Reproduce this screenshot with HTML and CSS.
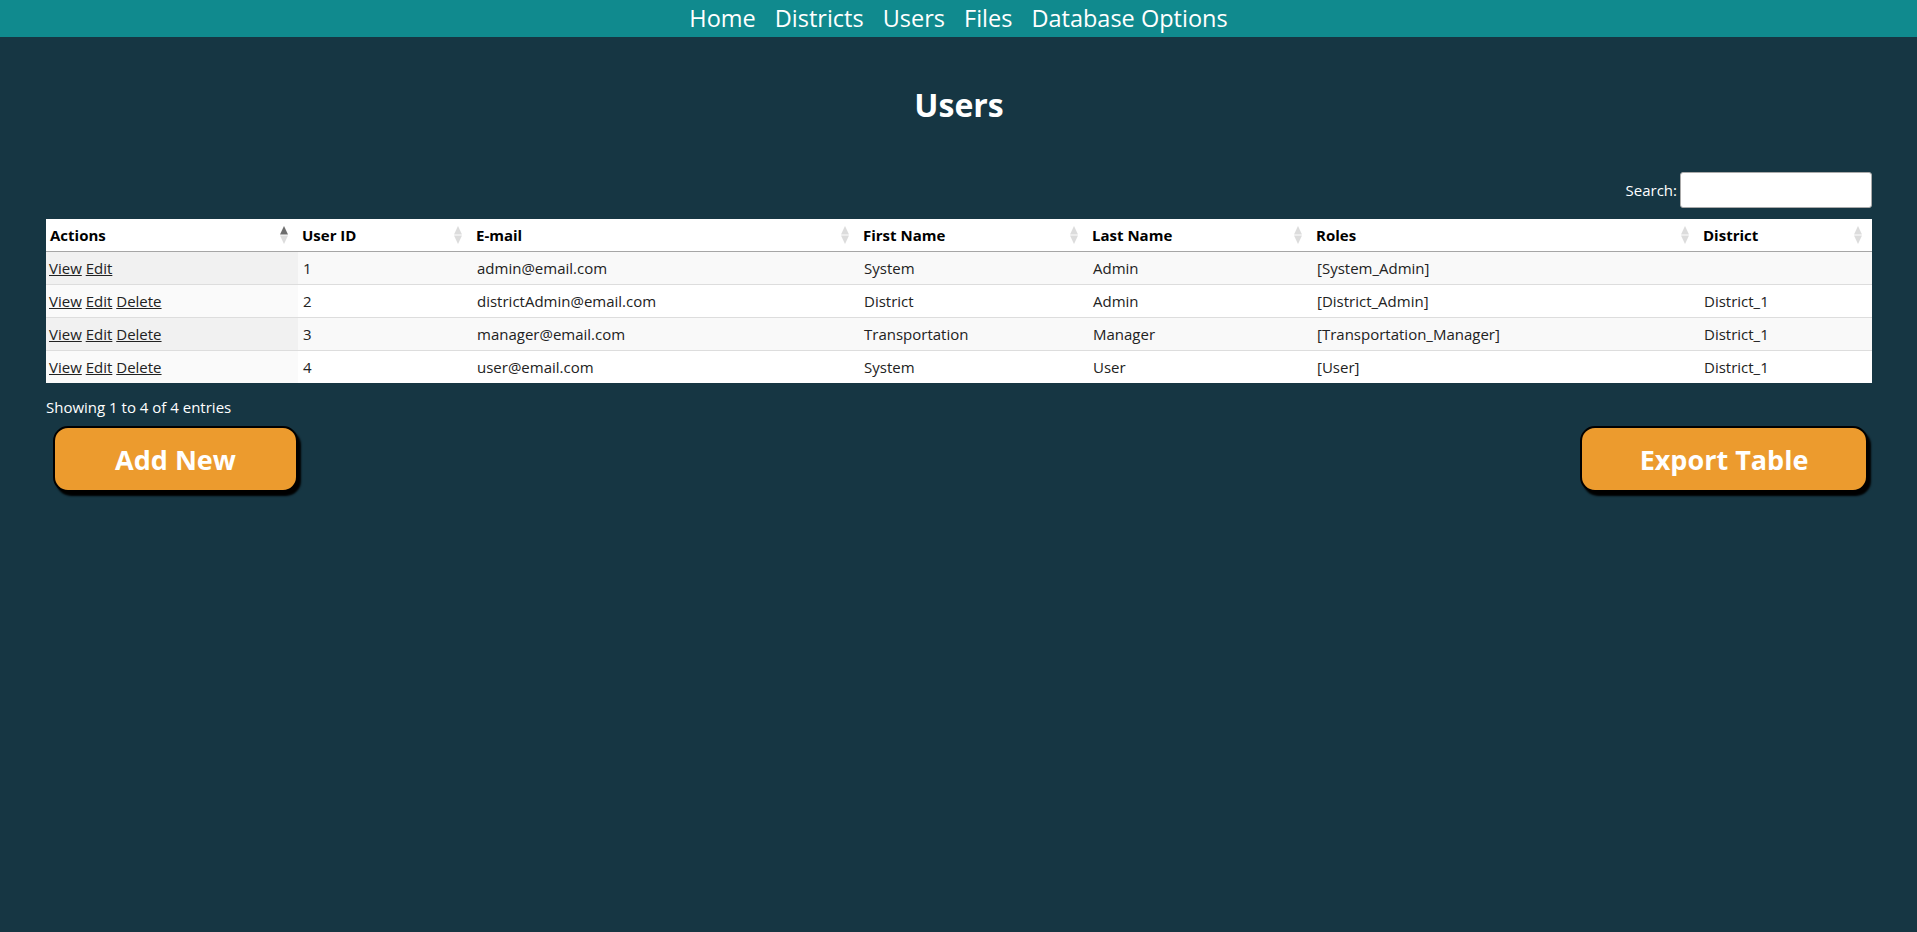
FILE: index.html
```html
<!DOCTYPE html>
<html>
<head>
<meta charset="utf-8">
<title>Users</title>
<link rel="stylesheet" href="styles.css">
</head>
<body>
<nav class="topnav">
  <a href="#">Home</a>
  <a href="#">Districts</a>
  <a href="#">Users</a>
  <a href="#">Files</a>
  <a href="#">Database Options</a>
</nav>
<main class="page">
  <h1 class="title">Users</h1>
  <div class="search-row">
    <label class="search-label">Search:<input class="search-input" type="search"></label>
  </div>
  <table class="grid">
    <colgroup>
      <col class="c-actions"><col class="c-id"><col class="c-email"><col class="c-first"><col class="c-last"><col class="c-roles"><col class="c-district">
    </colgroup>
    <thead>
      <tr>
        <th><div class="th-in"><span>Actions</span><svg class="sort" width="8" height="20" viewBox="0 0 8 20"><path d="M0 9.5 L4 1 L8 9.5 Z" fill="#6e6e6e"/><path d="M0 10.5 L4 19 L8 10.5 Z" fill="#dcdcdc"/></svg></div></th>
        <th><div class="th-in"><span>User ID</span><svg class="sort" width="8" height="20" viewBox="0 0 8 20"><path d="M0 9.5 L4 1 L8 9.5 Z" fill="#dcdcdc"/><path d="M0 10.5 L4 19 L8 10.5 Z" fill="#dcdcdc"/></svg></div></th>
        <th><div class="th-in"><span>E-mail</span><svg class="sort" width="8" height="20" viewBox="0 0 8 20"><path d="M0 9.5 L4 1 L8 9.5 Z" fill="#dcdcdc"/><path d="M0 10.5 L4 19 L8 10.5 Z" fill="#dcdcdc"/></svg></div></th>
        <th><div class="th-in"><span>First Name</span><svg class="sort" width="8" height="20" viewBox="0 0 8 20"><path d="M0 9.5 L4 1 L8 9.5 Z" fill="#dcdcdc"/><path d="M0 10.5 L4 19 L8 10.5 Z" fill="#dcdcdc"/></svg></div></th>
        <th><div class="th-in"><span>Last Name</span><svg class="sort" width="8" height="20" viewBox="0 0 8 20"><path d="M0 9.5 L4 1 L8 9.5 Z" fill="#dcdcdc"/><path d="M0 10.5 L4 19 L8 10.5 Z" fill="#dcdcdc"/></svg></div></th>
        <th><div class="th-in"><span>Roles</span><svg class="sort" width="8" height="20" viewBox="0 0 8 20"><path d="M0 9.5 L4 1 L8 9.5 Z" fill="#dcdcdc"/><path d="M0 10.5 L4 19 L8 10.5 Z" fill="#dcdcdc"/></svg></div></th>
        <th><div class="th-in"><span>District</span><svg class="sort" width="8" height="20" viewBox="0 0 8 20"><path d="M0 9.5 L4 1 L8 9.5 Z" fill="#dcdcdc"/><path d="M0 10.5 L4 19 L8 10.5 Z" fill="#dcdcdc"/></svg></div></th>
      </tr>
    </thead>
    <tbody>
      <tr class="odd">
        <td class="sorted"><a href="#">View</a> <a href="#">Edit</a></td>
        <td>1</td><td>admin@email.com</td><td>System</td><td>Admin</td><td>[System_Admin]</td><td></td>
      </tr>
      <tr class="even">
        <td class="sorted"><a href="#">View</a> <a href="#">Edit</a> <a href="#">Delete</a></td>
        <td>2</td><td>districtAdmin@email.com</td><td>District</td><td>Admin</td><td>[District_Admin]</td><td>District_1</td>
      </tr>
      <tr class="odd">
        <td class="sorted"><a href="#">View</a> <a href="#">Edit</a> <a href="#">Delete</a></td>
        <td>3</td><td>manager@email.com</td><td>Transportation</td><td>Manager</td><td>[Transportation_Manager]</td><td>District_1</td>
      </tr>
      <tr class="even">
        <td class="sorted"><a href="#">View</a> <a href="#">Edit</a> <a href="#">Delete</a></td>
        <td>4</td><td>user@email.com</td><td>System</td><td>User</td><td>[User]</td><td>District_1</td>
      </tr>
    </tbody>
  </table>
  <div class="info">Showing 1 to 4 of 4 entries</div>
  <div class="button-row">
    <button class="btn btn-add">Add New</button>
    <button class="btn btn-export">Export Table</button>
  </div>
</main>
</body>
</html>
```

FILE: styles.css
```css
html, body {
  margin: 0;
  padding: 0;
}
body {
  background: #163643;
  font-family: "Segoe UI", "Open Sans", "Noto Sans", sans-serif;
  color: #ffffff;
  min-height: 932px;
}
.topnav {
  background: #108a8e;
  height: 37px;
  display: flex;
  justify-content: center;
  align-items: center;
  gap: 19px;
}
.topnav a {
  color: #ffffff;
  text-decoration: none;
  font-size: 23.5px;
  line-height: 37px;
}
.page {
  padding: 0 45px 0 46px;
}
.title {
  margin: 0;
  padding-top: 46px;
  text-align: center;
  font-size: 32px;
  font-weight: bold;
  line-height: 44px;
}
.search-row {
  display: flex;
  justify-content: flex-end;
  margin-top: 45px;
}
.search-label {
  display: flex;
  align-items: center;
  font-size: 15px;
  gap: 3px;
}
.search-input {
  width: 192px;
  height: 36px;
  box-sizing: border-box;
  border: 1px solid #aaaaaa;
  border-radius: 3px;
  background: #ffffff;
  padding: 0 4px;
}
.grid {
  width: 100%;
  margin-top: 11px;
  border-collapse: collapse;
  table-layout: fixed;
  background: #ffffff;
  color: #222222;
  font-size: 15px;
}
.c-actions { width: 252px; }
.c-id { width: 174px; }
.c-email { width: 387px; }
.c-first { width: 229px; }
.c-last { width: 224px; }
.c-roles { width: 387px; }
.c-district { width: auto; }
.grid th {
  height: 32px;
  padding: 0 10px 0 4px;
  text-align: left;
  color: #000000;
  font-weight: bold;
  border-bottom: 1px solid #a6a6a6;
}
.th-in {
  display: flex;
  justify-content: space-between;
  align-items: center;
}
.sort {
  display: block;
}
.grid td {
  height: 32px;
  padding: 0 5px;
  border-top: 1px solid #dddddd;
  white-space: nowrap;
}
.grid tbody tr:first-child td {
  border-top: none;
  height: 32px;
}
.grid tr.odd td { background: #f9f9f9; }
.grid tr.even td { background: #ffffff; }
.grid tr.odd td.sorted { background: #f1f1f1; }
.grid tr.even td.sorted { background: #fafafa; }
.grid td.sorted { padding-left: 3px; }
.grid a {
  color: #222222;
  text-decoration: underline;
}
.info {
  margin-top: 14px;
  font-size: 15px;
  line-height: 20px;
}
.button-row {
  display: flex;
  justify-content: space-between;
  margin-top: 9px;
  padding: 0 4px 0 7px;
}
.btn {
  height: 66px;
  background: #ec9b2e;
  border: 2px solid #000000;
  border-radius: 15px;
  box-shadow: 3px 4px 2px #000000;
  color: #ffffff;
  font-family: "Segoe UI", "Open Sans", "Noto Sans", sans-serif;
  font-weight: bold;
  font-size: 27px;
  cursor: pointer;
}
.btn-add { width: 245px; }
.btn-export { width: 288px; }
```
